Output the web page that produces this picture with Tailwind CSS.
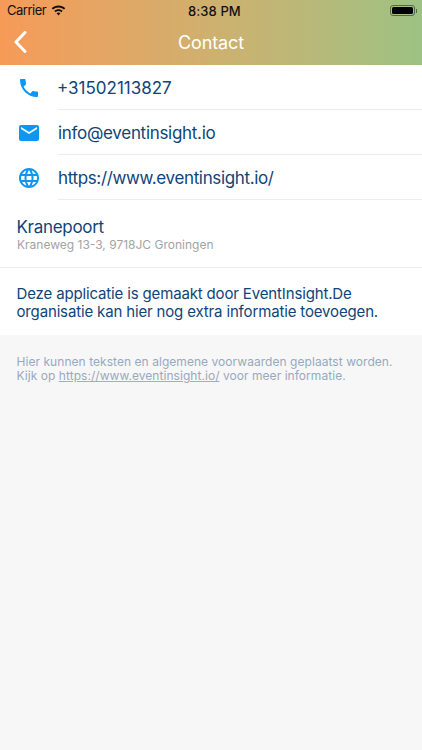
<!DOCTYPE html>
<html>
<head>
<meta charset="utf-8">
<script src="https://cdn.jsdelivr.net/npm/@tailwindcss/browser@4"></script>
</head>
<body class="m-0 bg-[#f7f7f7] font-['Inter',sans-serif]">
<div class="w-[422px] h-[750px] overflow-hidden flex flex-col bg-[#f7f7f7]">
  <header class="h-[65px] bg-gradient-to-r from-[#f79a58] to-[#9cc283] flex flex-col shrink-0">
    <div class="h-[21px] relative flex items-center text-[13px] text-[#111] px-[7px]">
      <span class="tracking-[-0.5px]">Carrier</span>
      <svg class="ml-[5px]" width="15" height="11" viewBox="0 0 15 11"><path d="M7.500 .5C4.900 .5 2.500 1.500.7 3.200l1.300 1.400C3.500 3.300 5.400 2.500 7.500 2.500s4 .8 5.500 2.100l1.300-1.400C12.500 1.500 10.100.5 7.500.5zM7.500 4.200c-1.600 0-3.100.6-4.200 1.600l1.300 1.400c.8-.7 1.800-1.100 2.900-1.100s2.100.4 2.900 1.100l1.300-1.400c-1.100-1-2.600-1.600-4.200-1.600zM7.500 7.600c-.8 0-1.400.3-1.900.7l1.900 2.200 1.900-2.200c-.5-.4-1.100-.7-1.900-.7z" fill="#111"/></svg>
      <span class="absolute left-[188px] top-[2px] text-[13px] font-medium tracking-[0.1px]">8:38 PM</span>
      <div class="absolute left-[390px] top-[5px] flex items-center">
        <div class="w-[25px] h-[11px] rounded-[3px] border border-[#4f6b45] p-[1px]"><div class="w-full h-full rounded-[1.500px] bg-black"></div></div>
        <div class="w-[1px] h-[4px] bg-[#4f6b45] ml-[1px]"></div>
      </div>
    </div>
    <div class="relative flex-1 flex items-center justify-center">
      <svg class="absolute left-[13px] top-[9px]" width="14" height="24" viewBox="0 0 14 24"><path d="M12 2.500 3 12l9 9.500" fill="none" stroke="#fff" stroke-width="3" stroke-linecap="round" stroke-linejoin="round"/></svg>
      <span class="text-[18px] text-white font-normal tracking-[-0.1px] leading-none mt-[-1px]">Contact</span>
    </div>
  </header>
  <section class="bg-white shrink-0">
    <div class="flex h-[45px] items-center">
      <div class="w-[58px] flex justify-center">
        <svg width="24" height="24" viewBox="0 0 24 24"><path fill="#0d96f2" d="M6.620 10.790c1.440 2.830 3.760 5.140 6.590 6.590l2.200-2.200c.27-.27.67-.36 1.020-.24 1.120.37 2.330.57 3.570.57.550 0 1 .45 1 1V20c0 .550-.45 1-1 1-9.390 0-17-7.610-17-17 0-.550.45-1 1-1h3.500c.550 0 1 .45 1 1 0 1.250.2 2.450.57 3.570.11.350.03.740-.25 1.020l-2.200 2.200z"/></svg>
      </div>
      <div class="flex-1 h-full flex items-center pt-[4px] border-b border-[#ececec] text-[17px] text-[#0f4479]"><span class="ml-[-1px]">+31502113827</span></div>
    </div>
    <div class="flex h-[45px] items-center">
      <div class="w-[58px] flex justify-center">
        <svg width="24" height="24" viewBox="0 0 24 24"><path fill="#0d96f2" d="M20 4H4c-1.100 0-1.990.9-1.990 2L2 18c0 1.100.9 2 2 2h16c1.100 0 2-.9 2-2V6c0-1.100-.9-2-2-2zm0 4-8 5-8-5V6l8 5 8-5v2z"/></svg>
      </div>
      <div class="flex-1 h-full flex items-center pt-[3px] border-b border-[#ececec] text-[17px] text-[#0f4479] tracking-[-0.3px]">info@eventinsight.io</div>
    </div>
    <div class="flex h-[45px] items-center">
      <div class="w-[58px] flex justify-center">
        <svg width="24" height="24" viewBox="0 0 24 24"><path fill="#0d96f2" d="M11.990 2C6.470 2 2 6.480 2 12s4.470 10 9.990 10C17.520 22 22 17.520 22 12S17.520 2 11.990 2zm6.930 6h-2.950c-.32-1.250-.78-2.450-1.380-3.560 1.840.63 3.370 1.910 4.330 3.560zM12 4.040c.83 1.200 1.480 2.530 1.910 3.960h-3.820c.43-1.430 1.080-2.760 1.910-3.960zM4.260 14C4.100 13.360 4 12.690 4 12s.1-1.360.26-2h3.380c-.08.66-.14 1.320-.14 2s.06 1.340.14 2H4.260zm.82 2h2.950c.32 1.250.78 2.450 1.380 3.560-1.840-.63-3.370-1.900-4.330-3.560zm2.950-8H5.080c.96-1.660 2.490-2.930 4.330-3.560C8.810 5.550 8.350 6.750 8.030 8zM12 19.960c-.83-1.200-1.480-2.530-1.910-3.960h3.820c-.43 1.430-1.080 2.760-1.910 3.960zM14.340 14H9.660c-.09-.66-.16-1.320-.16-2s.07-1.350.16-2h4.680c.09.65.16 1.320.16 2s-.07 1.340-.16 2zm.25 5.560c.6-1.110 1.060-2.310 1.380-3.560h2.950c-.96 1.650-2.490 2.930-4.330 3.560zM16.360 14c.08-.66.14-1.320.14-2s-.06-1.340-.14-2h3.380c.16.64.26 1.310.26 2s-.1 1.360-.26 2h-3.380z"/></svg>
      </div>
      <div class="flex-1 h-full flex items-center pt-[4px] border-b border-[#ececec] text-[17px] text-[#0f4479] tracking-[-0.36px]">https://www.eventinsight.io/</div>
    </div>
    <div class="h-[68px] pl-[16.500px] pt-[17px] border-b border-[#ececec]">
      <div class="text-[17px] leading-[20px] text-[#0f4479] tracking-[-0.3px]">Kranepoort</div>
      <div class="text-[12px] leading-[15px] text-[#a3a3a3] ml-[0.500px]">Kraneweg 13-3, 9718JC Groningen</div>
    </div>
    <div class="h-[67px] pl-[16.500px] pt-[17px] text-[15px] leading-[18px] text-[#0f4479] tracking-[-0.15px]">
      <p>Deze applicatie is gemaakt door EventInsight.De</p>
      <p>organisatie kan hier nog extra informatie toevoegen.</p>
    </div>
  </section>
  <section class="pl-[16.500px] pt-[19px] text-[12px] leading-[15px] text-[#97a9c0] tracking-[0.05px]">
    <p>Hier kunnen teksten en algemene voorwaarden geplaatst worden.</p>
    <p class="mt-[-1px]">Kijk op <span class="underline decoration-[#f09a60]">https://www.eventinsight.io/</span> voor meer informatie.</p>
  </section>
</div>
</body>
</html>
